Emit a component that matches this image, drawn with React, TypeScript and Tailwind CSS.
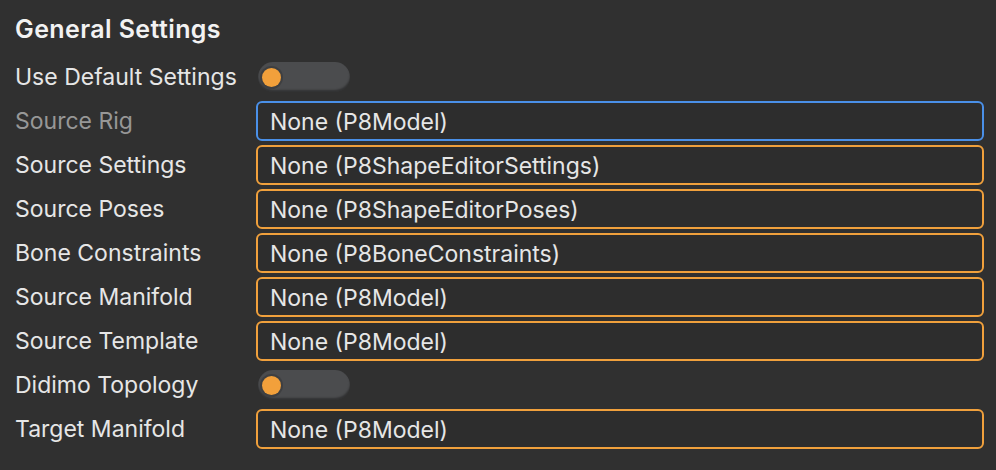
import React from 'react';

type Row =
  | { label: string; kind: 'toggle' }
  | { label: string; kind: 'field'; value: string; active?: boolean; dim?: boolean };

const rows: Row[] = [
  { label: 'Use Default Settings', kind: 'toggle' },
  { label: 'Source Rig', kind: 'field', value: 'None (P8Model)', active: true, dim: true },
  { label: 'Source Settings', kind: 'field', value: 'None (P8ShapeEditorSettings)' },
  { label: 'Source Poses', kind: 'field', value: 'None (P8ShapeEditorPoses)' },
  { label: 'Bone Constraints', kind: 'field', value: 'None (P8BoneConstraints)' },
  { label: 'Source Manifold', kind: 'field', value: 'None (P8Model)' },
  { label: 'Source Template', kind: 'field', value: 'None (P8Model)' },
  { label: 'Didimo Topology', kind: 'toggle' },
  { label: 'Target Manifold', kind: 'field', value: 'None (P8Model)' },
];

function Toggle() {
  return (
    <div className="flex h-[30px] w-[92px] items-center rounded-full bg-[#4b4c4e] pl-[2px] shadow-[inset_0_-2px_2px_rgba(0,0,0,0.35)]">
      <div className="h-[23px] w-[23px] rounded-full bg-[#3e3f41] p-[2px]">
        <div className="h-[19px] w-[19px] rounded-full bg-[#f2a03b]" />
      </div>
    </div>
  );
}

export default function App() {
  return (
    <div
      className="h-[470px] w-[996px] bg-[#303030] pl-[15px] pr-[12px] text-[#e6e6e6]"
      style={{ fontFamily: 'Inter, "Noto Sans", sans-serif' }}
    >
      <h1 className="pt-[15px] text-[25px] font-semibold leading-[28px] tracking-[0.4px] text-[#f2f2f2]">
        General Settings
      </h1>
      <div className="mt-[12px] grid grid-cols-[241px_1fr]">
        {rows.map((row) => (
          <React.Fragment key={row.label}>
            <div
              className={
                'flex h-[44px] items-center pt-[1px] text-[23px] ' +
                (row.kind === 'field' && row.dim ? 'text-[#979797]' : 'text-[#e6e6e6]')
              }
            >
              {row.label}
            </div>
            <div className="flex h-[44px] items-center">
              {row.kind === 'toggle' ? (
                <div className="pl-[2px]">
                  <Toggle />
                </div>
              ) : (
                <div
                  className={
                    'flex h-[40px] w-full items-center rounded-[6px] border-2 bg-[#2d2d2d] px-[12px] pt-[2px] text-[23px] text-[#e6e6e6] ' +
                    (row.active ? 'border-[#4a90e8]' : 'border-[#f0a03c]')
                  }
                >
                  {row.value}
                </div>
              )}
            </div>
          </React.Fragment>
        ))}
      </div>
    </div>
  );
}
